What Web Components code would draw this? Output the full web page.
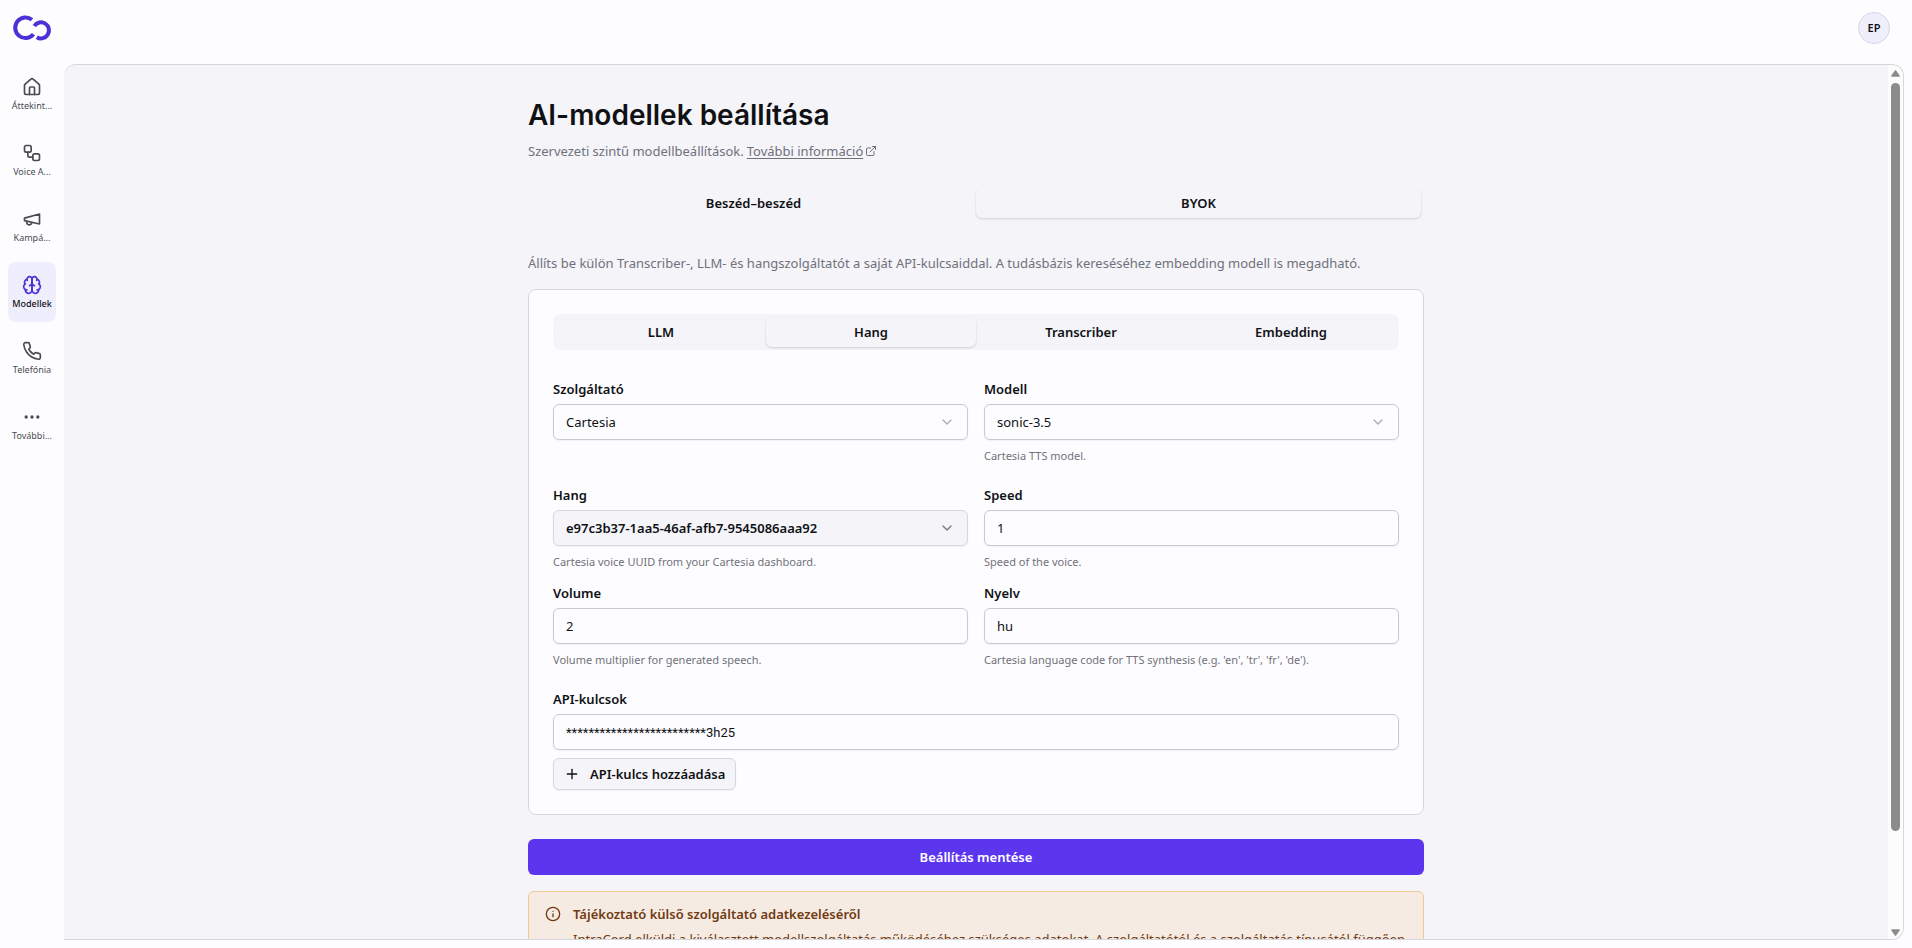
<!DOCTYPE html>
<html lang="hu">
<head>
<meta charset="utf-8">
<title>AI-modellek beállítása</title>
<style>
  :root {
    --surface: #fdfdff;
    --muted: #f4f4f9;
    --border: #d6d6dc;
    --input-border: #c9c9d0;
    --text: #101114;
    --text-muted: #71717a;
    --accent: #5c36ef;
    --accent-soft: #efeefd;
  }
  body {
    margin: 0;
    background: var(--surface);
    color: var(--text);
    font: 400 13px/20px "Noto Sans", "Open Sans", sans-serif;
  }
</style>
</head>
<body>
<app-shell>
  <app-logo slot="logo"></app-logo>
  <user-avatar slot="user">EP</user-avatar>
  <nav-item slot="nav" icon="house">Áttekint...</nav-item>
  <nav-item slot="nav" icon="workflow">Voice A...</nav-item>
  <nav-item slot="nav" icon="megaphone">Kampá...</nav-item>
  <nav-item slot="nav" icon="brain" active>Modellek</nav-item>
  <nav-item slot="nav" icon="phone">Telefónia</nav-item>
  <nav-item slot="nav" icon="ellipsis">További...</nav-item>

  <page-heading heading="AI-modellek beállítása" link="További információ">Szervezeti szintű modellbeállítások.</page-heading>
  <tab-bar items="Beszéd–beszéd|BYOK" selected="1" label="Üzemmód"></tab-bar>
  <section-note>Állíts be külön Transcriber-, LLM- és hangszolgáltatót a saját API-kulcsaiddal. A tudásbázis kereséséhez embedding modell is megadható.</section-note>
  <settings-card>
    <tab-bar items="LLM|Hang|Transcriber|Embedding" selected="1" label="Szolgáltatás"></tab-bar>
    <field-grid>
      <form-field type="select" label="Szolgáltató" value="Cartesia"></form-field>
      <form-field type="select" label="Modell" value="sonic-3.5" hint="Cartesia TTS model."></form-field>
    </field-grid>
    <field-grid>
      <form-field type="picker" label="Hang" value="e97c3b37-1aa5-46af-afb7-9545086aaa92" hint="Cartesia voice UUID from your Cartesia dashboard."></form-field>
      <form-field type="text" label="Speed" value="1" hint="Speed of the voice."></form-field>
      <form-field type="text" label="Volume" value="2" hint="Volume multiplier for generated speech."></form-field>
      <form-field type="text" label="Nyelv" value="hu" hint="Cartesia language code for TTS synthesis (e.g. 'en', 'tr', 'fr', 'de')."></form-field>
    </field-grid>
    <key-list>
      <form-field type="masked" label="API-kulcsok" value="*************************3h25"></form-field>
      <app-button variant="outline" icon="plus" slot="action">API-kulcs hozzáadása</app-button>
    </key-list>
  </settings-card>
  <app-button variant="primary">Beállítás mentése</app-button>
  <info-notice heading="Tájékoztató külső szolgáltató adatkezeléséről">IntraCord elküldi a kiválasztott modellszolgáltatás működéséhez szükséges adatokat. A szolgáltatótól és a szolgáltatás típusától függően</info-notice>
</app-shell>

<script>
const ICONS = {
  house: '<path d="M15 21v-8a1 1 0 0 0-1-1h-4a1 1 0 0 0-1 1v8"/><path d="M3 10a2 2 0 0 1 .709-1.528l7-5.999a2 2 0 0 1 2.582 0l7 5.999A2 2 0 0 1 21 10v9a2 2 0 0 1-2 2H5a2 2 0 0 1-2-2z"/>',
  workflow: '<rect width="8" height="8" x="3" y="3" rx="2"/><path d="M7 11v4a2 2 0 0 0 2 2h4"/><rect width="8" height="8" x="13" y="13" rx="2"/>',
  megaphone: '<path d="m3 11 18-5v12L3 14v-3z"/><path d="M11.6 16.8a3 3 0 1 1-5.8-1.6"/>',
  brain: '<path d="M12 5a3 3 0 1 0-5.997.125 4 4 0 0 0-2.526 5.77 4 4 0 0 0 .556 6.588A4 4 0 1 0 12 18Z"/><path d="M12 5a3 3 0 1 1 5.997.125 4 4 0 0 1 2.526 5.77 4 4 0 0 1-.556 6.588A4 4 0 1 1 12 18Z"/><path d="M15 13a4.5 4.5 0 0 1-3-4 4.5 4.5 0 0 1-3 4"/><path d="M17.599 6.5a3 3 0 0 0 .399-1.375"/><path d="M6.003 5.125A3 3 0 0 0 6.401 6.5"/><path d="M3.477 10.896a4 4 0 0 1 .585-.396"/><path d="M19.938 10.5a4 4 0 0 1 .585.396"/><path d="M6 18a4 4 0 0 1-1.967-.516"/><path d="M19.967 17.484A4 4 0 0 1 18 18"/>',
  phone: '<path d="M22 16.92v3a2 2 0 0 1-2.18 2 19.79 19.79 0 0 1-8.63-3.07 19.5 19.5 0 0 1-6-6 19.79 19.79 0 0 1-3.07-8.67A2 2 0 0 1 4.11 2h3a2 2 0 0 1 2 1.72 12.84 12.84 0 0 0 .7 2.81 2 2 0 0 1-.45 2.11L8.09 9.91a16 16 0 0 0 6 6l1.27-1.27a2 2 0 0 1 2.11-.45 12.84 12.84 0 0 0 2.81.7A2 2 0 0 1 22 16.92z"/>',
  ellipsis: '<circle cx="12" cy="12" r="1"/><circle cx="19" cy="12" r="1"/><circle cx="5" cy="12" r="1"/>',
  chevron: '<path d="m6 9 6 6 6-6"/>',
  plus: '<path d="M5 12h14"/><path d="M12 5v14"/>',
  external: '<path d="M15 3h6v6"/><path d="M10 14 21 3"/><path d="M18 13v6a2 2 0 0 1-2 2H5a2 2 0 0 1-2-2V8a2 2 0 0 1 2-2h6"/>',
  info: '<circle cx="12" cy="12" r="10"/><path d="M12 16v-4"/><path d="M12 8h.01"/>'
};
const icon = (name, size) =>
  `<svg class="icon" aria-hidden="true" width="${size}" height="${size}" viewBox="0 0 24 24" fill="none" stroke="currentColor" stroke-width="2" stroke-linecap="round" stroke-linejoin="round">${ICONS[name]}</svg>`;

const BASE = `
  *, *::before, *::after { box-sizing: border-box; }
  :host { display: block; box-sizing: border-box; }
  :host([hidden]) { display: none; }
  button, input, select { font: inherit; color: inherit; margin: 0; }
  .icon { display: block; flex: none; }
`;

class BaseElement extends HTMLElement {
  connectedCallback() {
    if (this.shadowRoot) return;
    this.attachShadow({ mode: 'open' }).innerHTML = `<style>${BASE}${this.styles()}</style>${this.render()}`;
  }
  attr(name) { return this.getAttribute(name) || ''; }
  styles() { return ''; }
  render() { return '<slot></slot>'; }
}

customElements.define('app-shell', class extends BaseElement {
  styles() { return `
    :host { display: grid; grid-template: 64px minmax(0, 1fr) / 64px minmax(0, 1fr); height: 100vh; overflow: hidden; }
    header { grid-column: 1 / -1; display: flex; justify-content: space-between; align-items: flex-start; padding: 12px 22px 0 12px; }
    nav { display: flex; flex-direction: column; gap: 6px; padding: 0 8px; }
    main { display: flex; margin: 0 8px 8px 0; border: 1px solid var(--border); border-left: 0; border-radius: 12px 12px 12px 0; background: var(--muted); overflow: hidden; }
    .scroll { flex: 1; min-width: 0; overflow: hidden; padding: 32px 24px 0; }
    .column { display: flex; flex-direction: column; gap: 16px; max-width: 896px; margin: 0 auto; }
    ::slotted(section-note) { margin-top: 16px; }
    ::slotted(page-heading), ::slotted(settings-card) { margin-bottom: 8px; }
  `; }
  render() { return `
    <header><slot name="logo"></slot><slot name="user"></slot></header>
    <nav><slot name="nav"></slot></nav>
    <main><div class="scroll"><div class="column"><slot></slot></div></div><scroll-rail></scroll-rail></main>
  `; }
});

customElements.define('scroll-rail', class extends BaseElement {
  styles() { return `
    :host { display: flex; flex-direction: column; align-items: center; gap: 6px; width: 15px; padding: 5px 0 3px; background: #fcfcfd; color: #8b8b8b; }
    .track { flex: 1; width: 9px; }
    .thumb { height: 89%; border-radius: 5px; background: currentColor; }
    svg { display: block; }
  `; }
  render() { return `
    <svg width="9" height="7" viewBox="0 0 9 7"><path d="M4.5 1 8 6H1z" fill="currentColor" stroke="currentColor" stroke-width="1.6" stroke-linejoin="round"/></svg>
    <div class="track"><div class="thumb"></div></div>
    <svg width="9" height="7" viewBox="0 0 9 7"><path d="M4.5 6 8 1H1z" fill="currentColor" stroke="currentColor" stroke-width="1.6" stroke-linejoin="round"/></svg>
  `; }
});

customElements.define('app-logo', class extends BaseElement {
  styles() { return `svg { display: block; margin-top: 2px; color: #4c32d6; }`; }
  render() { return `
    <svg role="img" aria-label="Logo" width="40" height="28" viewBox="12 14 40 28" fill="none" stroke="currentColor" stroke-width="4">
      <path d="M32 19.7A10.3 10.3 0 1 0 33.5 34.2"/>
      <path d="M34.3 26A8 8 0 1 1 36.8 37.2"/>
    </svg>`; }
});

customElements.define('user-avatar', class extends BaseElement {
  styles() { return `
    button { display: grid; place-items: center; width: 32px; height: 32px; padding: 0; border: 1px solid var(--border); border-radius: 50%; background: var(--accent-soft); font-size: 11px; font-weight: 600; line-height: 16px; }
  `; }
  render() { return '<button type="button"><slot></slot></button>'; }
});

customElements.define('nav-item', class extends BaseElement {
  styles() { return `
    a { display: flex; flex-direction: column; align-items: center; justify-content: center; gap: 4px; height: 60px; border-radius: 8px; color: #4b4b52; text-decoration: none; font-size: 9px; line-height: 10px; }
    span { white-space: nowrap; }
    :host([active]) a { background: var(--accent-soft); color: var(--text); font-weight: 500; }
    :host([active]) .icon { color: #4c32d6; }
  `; }
  render() { return `<a href="#" ${this.hasAttribute('active') ? 'aria-current="page"' : ''}>${icon(this.attr('icon'), 20)}<span><slot></slot></span></a>`; }
});

customElements.define('page-heading', class extends BaseElement {
  styles() { return `
    h1 { margin: 0 0 8px; font: 600 28px/36px Inter, sans-serif; }
    p { display: flex; gap: 3px; margin: 0; color: var(--text-muted); }
    a { display: inline-flex; align-items: center; gap: 2px; color: inherit; text-decoration: none; }
    a span { text-decoration: underline; text-underline-offset: 2px; }
  `; }
  render() { return `<h1>${this.attr('heading')}</h1><p><slot></slot><a href="#"><span>${this.attr('link')}</span>${icon('external', 12)}</a></p>`; }
});

customElements.define('section-note', class extends BaseElement {
  styles() { return `p { margin: 0; color: var(--text-muted); }`; }
  render() { return '<p><slot></slot></p>'; }
});

customElements.define('tab-bar', class extends BaseElement {
  styles() { return `
    div { display: grid; grid-auto-flow: column; grid-auto-columns: minmax(0, 1fr); height: 36px; padding: 3px; border-radius: 8px; background: var(--muted); }
    button { border: 0; border-radius: 6px; background: none; font-weight: 600; }
    button[aria-selected="true"] { background: var(--muted); box-shadow: 0 1px 3px rgba(0, 0, 0, .08), 0 1px 2px rgba(0, 0, 0, .08); }
  `; }
  render() {
    const selected = Number(this.attr('selected'));
    const tabs = this.attr('items').split('|').map((t, i) => `<button type="button" role="tab" aria-selected="${i === selected}">${t}</button>`).join('');
    return `<div role="tablist" aria-label="${this.attr('label')}">${tabs}</div>`;
  }
});

customElements.define('settings-card', class extends BaseElement {
  styles() { return `
    :host { display: flex; flex-direction: column; gap: 24px; padding: 24px; border: 1px solid var(--border); border-radius: 8px; background: var(--surface); }
    ::slotted(tab-bar) { margin-bottom: 8px; }
  `; }
});

customElements.define('field-grid', class extends BaseElement {
  styles() { return `:host { display: grid; grid-template-columns: repeat(2, minmax(0, 1fr)); gap: 16px; }`; }
});

customElements.define('key-list', class extends BaseElement {
  styles() { return `:host { display: flex; flex-direction: column; gap: 8px; } .actions { display: flex; }`; }
  render() { return '<slot></slot><div class="actions"><slot name="action"></slot></div>'; }
});

customElements.define('form-field', class extends BaseElement {
  styles() { return `
    :host { display: flex; flex-direction: column; gap: 8px; }
    label { font-weight: 600; line-height: 14px; }
    .control { display: grid; align-items: center; }
    .control > * { grid-area: 1 / 1; }
    .control .icon { justify-self: end; margin-right: 13px; color: #77777f; pointer-events: none; }
    input, select, button { appearance: none; width: 100%; height: 36px; padding: 0 12px; border: 1px solid var(--input-border); border-radius: 6px; background: var(--surface); box-shadow: 0 1px 2px rgba(0, 0, 0, .05); text-align: left; outline: none; }
    select ~ .icon { opacity: .6; }
    button { background: var(--muted); border-color: var(--border); font-weight: 600; }
    .masked { font-family: Roboto, sans-serif; }
    p { margin: 0; color: var(--text-muted); font-size: 11px; line-height: 16px; }
  `; }
  render() {
    const type = this.attr('type'), value = this.attr('value'), hint = this.attr('hint');
    const control = {
      select: `<select id="c"><option>${value}</option></select>${icon('chevron', 16)}`,
      picker: `<button id="c" type="button">${value}</button>${icon('chevron', 16)}`,
      text: `<input id="c" type="text" value="${value}">`,
      masked: `<input id="c" class="masked" type="text" value="${value}">`
    }[type];
    return `<label for="c">${this.attr('label')}</label><div class="control">${control}</div>${hint ? `<p>${hint}</p>` : ''}`;
  }
});

customElements.define('app-button', class extends BaseElement {
  styles() { return `
    button { display: flex; align-items: center; justify-content: center; gap: 10px; width: 100%; height: 36px; padding: 0 10px; border: 0; border-radius: 6px; background: var(--accent); color: #fff; font-weight: 600; white-space: nowrap; }
    :host([variant="outline"]) button { height: 32px; border: 1px solid var(--border); background: var(--muted); color: var(--text); box-shadow: 0 1px 2px rgba(0, 0, 0, .05); }
  `; }
  render() { return `<button type="button">${this.attr('icon') ? icon(this.attr('icon'), 16) : ''}<slot></slot></button>`; }
});

customElements.define('info-notice', class extends BaseElement {
  styles() { return `
    section { display: flex; gap: 12px; padding: 12px 16px; border: 1px solid #edcb95; border-radius: 6px; background: #f5ebe2; color: #713a12; }
    .icon { margin-top: 2px; }
    h2 { margin: 0 0 4px; font-size: 13px; line-height: 20px; font-weight: 600; }
    p { margin: 0; line-height: 22px; }
  `; }
  render() { return `<section>${icon('info', 16)}<div><h2>${this.attr('heading')}</h2><p><slot></slot></p></div></section>`; }
});
</script>
</body>
</html>
